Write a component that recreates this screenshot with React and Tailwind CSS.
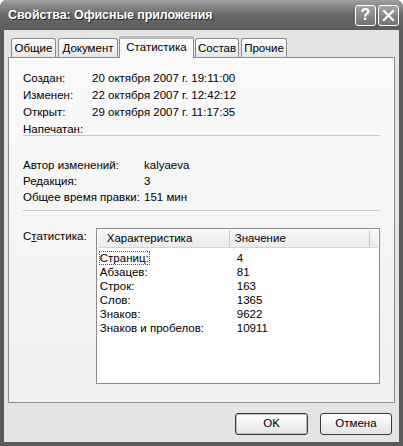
import React from "react";

const font = { fontFamily: '"Liberation Sans", Arial, sans-serif' };

function Tab({ label, active, w, extra = "" }) {
  if (active) {
    return (
      <div
        className={`relative z-10 -mb-px h-[22px] ${w} ${extra} flex items-center justify-center rounded-t-[3px] border border-b-0 border-[#8d8d8d] bg-[#f9f9f9] text-[11.5px] text-black`}
      >
        <div className="absolute -left-px -right-px -top-px h-[3px] rounded-t-[3px] bg-[#bdbdbd]" />
        <span className="mt-[1px]">{label}</span>
      </div>
    );
  }
  return (
    <div
      className={`h-[19px] ${w} ${extra} flex items-center justify-center rounded-t-[3px] border border-b-0 border-[#8d8d8d] bg-gradient-to-b from-[#fdfdfd] to-[#e6e6e6] text-[11.5px] text-black`}
    >
      <span className="mt-[1px]">{label}</span>
    </div>
  );
}

function Row({ label, value, lw, h = "h-[17px]" }) {
  return (
    <div className={`flex ${h} items-center`}>
      <div className={lw}>{label}</div>
      <div>{value}</div>
    </div>
  );
}

export default function App() {
  const stats = [
    ["Страниц:", "4"],
    ["Абзацев:", "81"],
    ["Строк:", "163"],
    ["Слов:", "1365"],
    ["Знаков:", "9622"],
    ["Знаков и пробелов:", "10911"],
  ];
  return (
    <div
      className="flex h-[446px] w-[403px] flex-col overflow-hidden rounded-t-[7px] bg-[#5a5a5a]"
      style={font}
    >
      {/* Title bar */}
      <div className="flex h-[30px] shrink-0 items-center bg-gradient-to-b from-[#a0a0a0] via-[#686868] to-[#5c5c5c] pl-[8px] pr-[4px]">
        <div className="flex-1 text-[12.5px] font-bold tracking-[-0.1px] text-white [text-shadow:1px_1px_0_#2a2a2a]">
          Свойства: Офисные приложения
        </div>
        <div className="flex gap-[2px]">
          <div className="flex h-[21px] w-[21px] items-center justify-center rounded-[3px] border border-white bg-gradient-to-b from-[#a4a4a4] to-[#707070] text-[16px] font-bold text-white">
            ?
          </div>
          <div className="flex h-[21px] w-[21px] items-center justify-center rounded-[3px] border border-white bg-gradient-to-b from-[#a4a4a4] to-[#707070]">
            <svg width="13" height="13" viewBox="0 0 13 13">
              <path d="M2 2 L11 11 M11 2 L2 11" stroke="white" strokeWidth="2.2" strokeLinecap="square" />
            </svg>
          </div>
        </div>
      </div>

      {/* Body */}
      <div className="mx-[4px] mb-[4px] flex flex-1 flex-col bg-[#e4e4e4] px-[4px] pt-[5px]">
        {/* Tabs */}
        <div className="flex h-[22px] items-end gap-[2px] pl-[3px]">
          <Tab label="Общие" w="w-[45px]" />
          <Tab label="Документ" w="w-[60px]" />
          <Tab label="Статистика" w="w-[75px]" extra="-mx-[1px]" active />
          <Tab label="Состав" w="w-[44px]" />
          <Tab label="Прочие" w="w-[46px]" />
        </div>

        {/* Panel */}
        <div className="h-[346px] border border-[#8d8d8d] bg-gradient-to-b from-[#fafafa] to-[#f0f0f0] px-[14px] pt-[12px] text-[11.5px] text-black">
          <Row label="Создан:" value="20 октября 2007 г. 19:11:00" lw="w-[69px]" />
          <Row label="Изменен:" value="22 октября 2007 г. 12:42:12" lw="w-[69px]" />
          <Row label="Открыт:" value="29 октября 2007 г. 11:17:35" lw="w-[69px]" />
          <Row label="Напечатан:" value="" lw="w-[69px]" />
          <div className="-mt-[3px] h-px bg-[#c8c8c8]" />

          <div className="mt-[22px]">
            <Row label="Автор изменений:" value="kalyaeva" lw="w-[121px]" h="h-[16px]" />
            <Row label="Редакция:" value="3" lw="w-[121px]" h="h-[16px]" />
            <Row label="Общее время правки:" value="151 мин" lw="w-[121px]" h="h-[16px]" />
          </div>
          <div className="mt-[4px] h-px bg-[#c8c8c8]" />

          <div className="mt-[17px] flex">
            <div className="w-[73px] pt-0">
              С<span className="underline">т</span>атистика:
            </div>
            <div className="h-[156px] w-[285px] border border-[#8a8a8a] bg-white p-[1px]">
              <div className="flex h-[18px] items-center border-b border-[#d4d4d4] bg-gradient-to-b from-[#f7f7f7] to-[#ebebeb]">
                <div className="w-[132px] border-r border-[#c8c8c8] pl-[9px]">Характеристика</div>
                <div className="flex-1 border-r border-[#c8c8c8] pl-[5px]">Значение</div>
                <div className="w-[8px]" />
              </div>
              <div className="pt-[4px]">
                {stats.map(([k, v], i) => (
                  <div key={k} className="flex h-[14px] items-center">
                    <div className="w-[139px] pl-[2px]">
                      <span className={i === 0 ? "outline-1 outline-dotted outline-[#555]" : ""}>{k}</span>
                    </div>
                    <div>{v}</div>
                  </div>
                ))}
              </div>
            </div>
          </div>
        </div>

        {/* Buttons */}
        <div className="mt-[10px] flex justify-end gap-[12px] pr-[3px]">
          <div className="flex h-[22px] w-[73px] items-center justify-center rounded-[3px] border border-[#3a3a3a] bg-gradient-to-b from-[#ffffff] to-[#e4e4e4] text-[11.5px] shadow-[inset_0_0_0_1px_#bdbdbd]">
            OK
          </div>
          <div className="flex h-[22px] w-[72px] items-center justify-center rounded-[3px] border border-[#3a3a3a] bg-gradient-to-b from-[#ffffff] to-[#e4e4e4] text-[11.5px]">
            Отмена
          </div>
        </div>
      </div>
    </div>
  );
}
